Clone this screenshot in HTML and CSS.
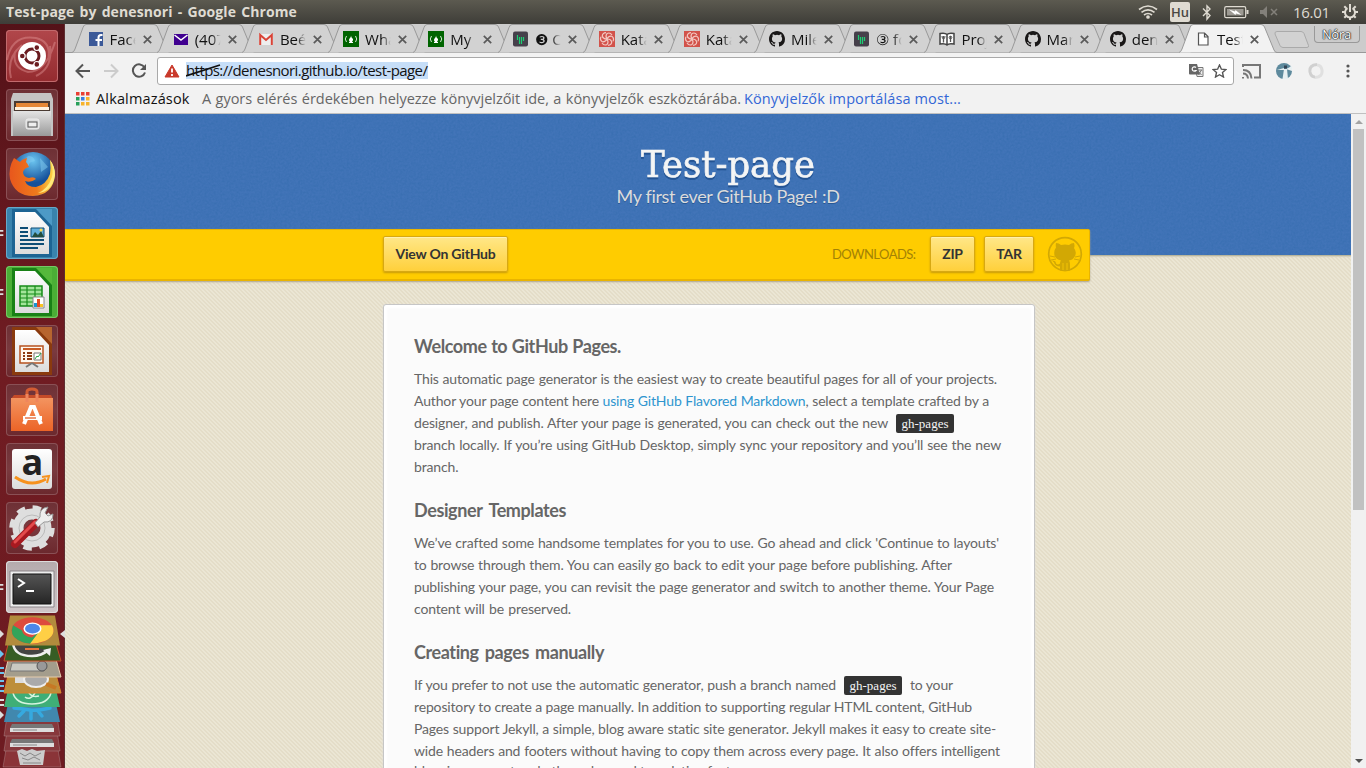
FILE: index.html
```html
<!DOCTYPE html>
<html lang="hu">
<head>
<meta charset="utf-8">
<title>Test-page by denesnori</title>
<link rel="stylesheet" href="styles.css">
</head>
<body>
<svg class="defs" width="0" height="0">
  <defs>
    <linearGradient id="paper" x2="0" y2="1"><stop offset="0" stop-color="#fff"/><stop offset="1" stop-color="#dcdcdc"/></linearGradient>
    <linearGradient id="silver" x2="0" y2="1"><stop offset="0" stop-color="#e4e4e4"/><stop offset="1" stop-color="#999"/></linearGradient>
    <linearGradient id="orange" x2="0" y2="1"><stop offset="0" stop-color="#f39460"/><stop offset="1" stop-color="#ec6427"/></linearGradient>
    <linearGradient id="dark" x2="0" y2="1"><stop offset="0" stop-color="#555"/><stop offset="1" stop-color="#252525"/></linearGradient>
    <linearGradient id="fox" x2="1" y2="0"><stop offset="0" stop-color="#e8571d"/><stop offset=".6" stop-color="#ee7a1c"/><stop offset="1" stop-color="#ffe04a"/></linearGradient>
    <radialGradient id="globe" cx=".5" cy=".2"><stop offset="0" stop-color="#6cc5f0"/><stop offset="1" stop-color="#15509a"/></radialGradient>
    <filter id="noise"><feTurbulence type="fractalNoise" baseFrequency=".45" numOctaves="2"/><feColorMatrix values="0 0 0 0 0  0 0 0 0 .08  0 0 0 0 .25  .9 .9 0 0 -.65"/></filter>
  </defs>
  <symbol id="tab" viewBox="0 0 98 29"><path d="M0 28.5 Q2 28 3 25 L11 3.500Q12 .5 14 .5H82Q84.500 .5 85.500 3L95 26Q96 28.500 98 28.500" stroke="#999"/></symbol>
  <symbol id="x" viewBox="0 0 9 9"><path d="M.8.8 8.200 8.200M8.200.8.8 8.200" stroke="#5a5a5a" stroke-width="1.700"/></symbol>
  <symbol id="cat" viewBox="0 0 16 16"><path fill="#191717" d="M8 0C3.580 0 0 3.580 0 8c0 3.540 2.290 6.530 5.470 7.590.4.070.55-.17.55-.38 0-.19-.01-.82-.01-1.490-2.010.37-2.530-.49-2.690-.94-.09-.23-.48-.94-.82-1.130-.28-.15-.68-.52-.01-.53.63-.01 1.080.58 1.230.82.72 1.210 1.870.87 2.330.66.07-.52.28-.87.51-1.070-1.780-.2-3.640-.89-3.640-3.950 0-.87.31-1.590.82-2.150-.08-.2-.36-1.020.08-2.120 0 0 .67-.21 2.200.82a7.600 7.600 0 0 1 4 0c1.530-1.040 2.200-.82 2.200-.82.44 1.100.16 1.920.08 2.120.51.56.82 1.270.82 2.150 0 3.070-1.870 3.750-3.650 3.950.29.25.54.73.54 1.480 0 1.070-.01 1.930-.01 2.200 0 .21.15.46.55.38A8.010 8.010 0 0 0 16 8c0-4.420-3.580-8-8-8Z"/></symbol>
  <symbol id="fcc" viewBox="0 0 16 16"><path fill="#006400" d="M0 0h16v16H0z"/><path d="M3.500 5Q1 8 3.500 11M12.500 5q2.500 3 0 6" fill="none" stroke="#d5e8d5"/><path d="M8 4.500q.2 2 1.500 3T9 11H7Q5 9 7 7q1-1 1-2.500z" fill="#fff"/><path d="M6 11.500h4" stroke="#fff"/></symbol>
  <symbol id="gitter" viewBox="0 0 16 16"><rect width="15" height="15" y=".5" rx="2" fill="#46404b"/><path d="M4.500 4v5M6.500 6v7M8.500 6v7M10.500 6v4" stroke="#1dce73" stroke-width="1.200"/></symbol>
  <symbol id="kata" viewBox="0 0 16 16"><path fill="#d2524a" d="M0 0h16v16H0z"/><g fill="none" stroke="#f3c7c1" stroke-width="1.200"><path id="petal" d="M8 8Q6 5 8 2.500q3-1.500 5 1.500"/><use href="#petal" transform="rotate(60 8 8)"/><use href="#petal" transform="rotate(120 8 8)"/><use href="#petal" transform="rotate(180 8 8)"/><use href="#petal" transform="rotate(240 8 8)"/><use href="#petal" transform="rotate(300 8 8)"/></g></symbol>
  <symbol id="runs" viewBox="0 0 6 8"><path d="M0 1.500h4M0 6.500h4" stroke="#ddd" stroke-width="2"/></symbol>
</svg>

<header class="panel">
  <span class="window-title">Test-page by denesnori - Google Chrome</span>
  <div class="indicators">
    <svg width="20" height="16" viewBox="0 0 20 16" fill="none" stroke="#dfdbd2" stroke-width="1.700"><path d="M1 5.500Q10-1.500 19 5.500M3.500 8.300q6.500-5 13 0M6 11q4-3 8 0"/><circle cx="10" cy="13" r="1" fill="#dfdbd2"/></svg>
    <span class="lang">Hu</span>
    <svg class="bt" width="10" height="17" viewBox="0 0 10 17" fill="none" stroke="#dfdbd2" stroke-width="1.400"><path d="m1 4.500 7 7L5 15V2l3 3-7 7"/></svg>
    <svg class="bat" width="25" height="14" viewBox="0 0 25 14"><rect x=".7" y="1.700" width="21" height="11" rx="1.500" fill="none" stroke="#dfdbd2" stroke-width="1.200"/><path d="M3 4h16.500v6.500H3z" fill="#9d9a93"/><path d="M22.500 5h2v4h-2z" fill="#dfdbd2"/><path d="m5 4.500 6 2 .5-1.500 6 5-5.500-1.500-.5 1.500z" fill="#fff"/></svg>
    <svg class="mute" width="18" height="14" viewBox="0 0 18 14"><path d="M0 5h3l4-4v12L3 9H0z" fill="#83807a"/><path d="m11 4 6 6m0-6-6 6" stroke="#83807a" stroke-width="1.500"/></svg>
    <span class="clock">16.01</span>
    <svg class="gear" width="16" height="16" viewBox="0 0 16 16" fill="none" stroke="#dfdbd2"><path d="M5.500 4.200a5 5 0 1 0 5 0" stroke-width="2"/><path d="M8 0v8" stroke-width="2"/><path d="M0 8h3M13 8h3M8 13v3M2.300 2.300l2 2M13.700 2.300l-2 2M2.300 13.700l2-2M13.700 13.700l-2-2" stroke-width="2"/></svg>
  </div>
</header>

<div class="desktop">
<nav class="launcher">
  <div class="tile dash"><svg viewBox="0 0 52 52"><g fill="none" stroke="#e9a09f" stroke-opacity=".4" stroke-width="2"><path d="M1 30Q6 4 30 8q16 4 12 22M49 12Q40 42 22 42 6 38 9 22M5 48Q0 28 16 15M30 46q17-8 14-30"/></g><circle cx="26" cy="26" r="14" fill="#fff"/><circle cx="26" cy="26" r="7" fill="none" stroke="#6a1c20" stroke-width="3"/><g stroke="#fff" stroke-width="1.200" fill="#6a1c20"><circle cx="16.300" cy="26" r="2.900"/><circle cx="30.800" cy="17.600" r="2.900"/><circle cx="30.800" cy="34.400" r="2.900"/></g></svg></div>
  <div class="tile"><svg viewBox="0 0 52 52"><path d="M7 4h38l2 6v37H5V10z" fill="#c4c4c4"/><path d="M8 12h36v12H8z" fill="#493a32"/><path d="M10 14h32v7H10z" fill="#e58735"/><path d="M9 18h34v3H9z" fill="#fff2df"/><path d="M7 22h38v25H7z" fill="url(#silver)"/><rect x="20" y="30" width="13" height="10" rx="2" fill="#ddd" stroke="#eee"/><rect x="22" y="33" width="9" height="5" fill="#eee" stroke="#555"/></svg></div>
  <div class="tile"><svg viewBox="0 0 52 52"><circle cx="27" cy="26" r="22" fill="url(#globe)"/><path d="M22 8q6 0 7 5-7 1-6 5l-7-3zM34 10l8 9-7 5z" fill="#83cdf1" opacity=".5"/><path d="M8 10Q2 20 4 31 9 48 27 48 47 47 49 27 49 19 44 12q1 8 0 14-4 11-14 13-9 0-11-6 6 2 11-2-2-3-7-1-6-1-6-6 1-4 6-5-1-3-3-5l1-4q-5 1-7 4-3-2-6-4z" fill="url(#fox)"/><path d="M44 12q4 9 2 17-4 12-14 16 14-1 17-18 0-9-5-15z" fill="#ffe97b"/></svg></div>
  <div class="tile writer"><svg class="mark"><use href="#runs"/></svg><svg viewBox="0 0 52 52"><path d="M6 2h40v48H6z" fill="#165c8c" opacity=".8"/><path d="M30 2h16v17z" fill="#4d9ac6"/><path d="M9 5h20l14 15v27H9z" fill="url(#paper)"/><path d="M14 21h8m-8 4h8m-8 4h8m-8 4h24m-24 4h24m-24 4h18" stroke="#0d4d75" stroke-width="2"/><path d="M25 21h13v9H25z" fill="#62b0dc" stroke="#0d4d75"/><path d="m26 30 3-5 3 3 3-4 3 6z" fill="#244e3e"/><circle cx="35" cy="23" r="1.500" fill="#ffd94d"/></svg></div>
  <div class="tile calc"><svg class="mark"><use href="#runs"/></svg><svg viewBox="0 0 52 52"><path d="M6 2h40v48H6z" fill="#147c13" opacity=".9"/><path d="M30 2h16v17z" fill="#55b83b"/><path d="M9 5h20l14 15v27H9z" fill="url(#paper)"/><path d="M14 20h22v20H14z" fill="#a3e59a" stroke="#178c19" stroke-width="1.500"/><path d="M14 24h22m-22 4h22m-22 4h22m-22 4h22M21 20v20M29 20v20" stroke="#178c19" stroke-width="1.200"/><path d="M27 31h11v11H27z" fill="#fff" stroke="#888"/><path d="M28 37h3v4h-3z" fill="#1b94d3"/><path d="M31 33h3v8h-3z" fill="#e64b22"/><path d="M34 38h3v3h-3z" fill="#f9c424"/></svg></div>
  <div class="tile"><svg viewBox="0 0 52 52"><path d="M6 2h40v48H6z" fill="#8a3a0e"/><path d="M30 2h16v17z" fill="#b7652f"/><path d="M9 5h20l14 15v27H9z" fill="url(#paper)"/><path d="M14 21h23v17H14z" fill="#fff8ef" stroke="#b65220" stroke-width="1.500"/><path d="M17 24h18" stroke="#c85c25" stroke-width="2"/><path d="M17 28h2m2 0h5m-9 3h2m2 0h5m-9 3h2m2 0h5" stroke="#8c3a11" stroke-width="2"/><path d="M28 28h7v7h-7z" fill="#fff" stroke="#777"/><path d="m29 34 2-3 1 1 3-4" fill="none" stroke="#28a745"/><path d="m26 38-6 4m6-4 6 4" stroke="#777" stroke-width="2"/></svg></div>
  <div class="tile"><svg viewBox="0 0 52 52"><path d="M21 18V8q0-3 5-3t5 3v10" fill="none" stroke="#d35c33" stroke-width="3"/><path d="m8 11 37 0 2 4H5z" fill="#c54b28"/><path d="M5 14h42v33H5z" fill="url(#orange)"/><path d="M21 10v8M31 10v8" stroke="#ef855d" stroke-width="3"/><path d="m18 40 7-17h3l7 17" fill="none" stroke="#fff" stroke-width="4"/><path d="M17 34h19" stroke="#fff" stroke-width="4"/><path d="M19 34h11" stroke="#e4602c" stroke-width="1.300"/></svg></div>
  <div class="tile"><svg viewBox="0 0 52 52"><rect x="6" y="6" width="40" height="40" rx="3" fill="url(#paper)"/><text x="15.500" y="32" class="amazon">a</text><path d="M9 34q16 11 31 2" fill="none" stroke="#f6921e" stroke-width="3"/><path d="m36 34 7-1-2 7" fill="none" stroke="#f6921e" stroke-width="2"/></svg></div>
  <div class="tile"><svg viewBox="0 0 52 52"><circle cx="26" cy="26" r="14" fill="none" stroke="#dedede" stroke-width="11"/><circle cx="26" cy="26" r="20.500" fill="none" stroke="#dedede" stroke-width="4.500" stroke-dasharray="8.500 7.600"/><circle cx="26" cy="26" r="13" fill="none" stroke="#bbb"/><path d="m9 42 21-21" stroke="#a71920" stroke-width="8" stroke-linecap="round"/><path d="m9 40 20-20" stroke="#e34b4c" stroke-width="3" stroke-linecap="round"/><path d="m29 21 5-6q-1-9 8-10l-3 6 3 3 5-2q0 9-9 8l-6 5z" fill="#eee" stroke="#999"/></svg></div>
  <div class="tile term"><svg class="mark"><use href="#runs"/></svg><svg viewBox="0 0 52 52"><path d="M4 10h44v36H4z" fill="#eee" stroke="#8b8589"/><path d="M7 13h38v30H7z" fill="url(#dark)" stroke="#111"/><path d="m12 18 6 4-6 4M20 30h8" fill="none" stroke="#fff" stroke-width="2"/></svg></div>
  <svg class="stack" width="65" height="155" viewBox="0 0 65 155">
    <g transform="translate(0 -5)">
    <g stroke="#ddd" stroke-opacity=".25"><path d="m8 129 48 0 5 29H3z" fill="#8a3438"/><path d="m8 115h48l4 27H4z" fill="#87383c"/><path d="M8 100h48l4 27H4z" fill="#87383c"/></g>
    <path d="M12 115h40l2 4H10zM12 130h40l2 4H10z" fill="#777"/><path d="M10 119h44v4H10zM10 134h44v4H10z" fill="#ddd"/><path d="M13 121h24M13 136h24" stroke="#888"/>
    <path d="m17 142 5-2 5 2 5-2 5 2 8-1-2 15H20z" fill="#ccc"/><path d="M20 144l5 3 5-3 5 3 6-3M22 149l6 2 6-3 6 3M23 154h18" fill="none" stroke="#888"/>
    <path d="M9 90h46l5 23H4z" fill="#4188ae"/><path d="M14 99q10 1 16 2t20-2M24 102l-5 5m12-5v8m7-8 4 5" fill="none" stroke="#36a9df" stroke-width="3.500" stroke-linecap="round"/>
    <path d="M9 76h46l5 22H4z" fill="#3fae77"/><path d="M13 84q3 11 19 11t19-11M25 88q5 4 10-4M28 82q3 7 11 5" fill="none" stroke="#d5f4df" stroke-width="1.500"/>
    <path d="M9 62h46l6 22H4z" fill="#bd8e3b" stroke="#d9852a"/><path d="M15 71h20" stroke="#ddd" stroke-width="6"/><ellipse cx="36" cy="70" rx="12" ry="8" fill="#aaa" stroke="#eee" stroke-width="2"/><path d="m46 75 10 4" stroke="#c77824" stroke-width="4"/>
    <path d="M9 47h46l6 21H4z" fill="#a49d8c" stroke="#e5cbac"/><path d="M12 54h32v8H10z" fill="#c9c9c2" stroke="#777"/><circle cx="42" cy="57" r="5" fill="#999" stroke="#555"/>
    <path d="M9 31h46l6 21H4z" fill="#365d24" stroke="#c54b25"/><path d="M13 34q1 13 19 13 10 0 16-6" fill="#444" stroke="#eee" stroke-width="2.500"/><path d="m43 41 8-2-1 8z" fill="#eee"/><path d="M25 40h14" stroke="#e8763c" stroke-width="2"/>
    </g>
    <g transform="translate(0 .6) scale(1 .88)"><path d="m10 1 45 0 5 34H5z" fill="#b28b3d"/><ellipse cx="32.500" cy="18" rx="21" ry="15" fill="#dd4b3e"/><path d="M13 12Q9 23 18 29q6 4 13 4l9-15-8 8q-9-1-10-8z" fill="#31a45a"/><path d="M52 12q5 11-7 18-7 3-15 3l10-15q0-3-5-6z" fill="#ffcf45"/><ellipse cx="32.500" cy="16" rx="9" ry="7" fill="#fff"/><ellipse cx="32.500" cy="16" rx="7.500" ry="5.500" fill="#4d87e8"/></g>
    <path d="m0 16 4 4-4 4zM65 16l-5 4 5 4zM0 97l4 4-4 4z" fill="#ddd"/><path d="m0 36 4 4-4 4z" fill="#6cc4ee"/><path d="M0 54h4M0 59h4M0 67h4M0 72h4M0 77h4" stroke="#6cc4ee" stroke-width="2"/><path d="M0 86h4m-4 5h4" stroke="#ddd" stroke-width="2"/>
  </svg>
</nav>

<main class="browser">
  <div class="tabs">
    <div class="tab"><svg class="shape"><use href="#tab"/></svg><svg class="fav" viewBox="0 0 16 16"><path fill="#3b5998" d="M1 1h14v14H1z"/><path d="M10.500 15V6.500q0-2.500 2.500-2.500h1.500M7.500 9h6.500" fill="none" stroke="#fff" stroke-width="2"/></svg><span>Face</span><svg class="close"><use href="#x"/></svg></div>
    <div class="tab"><svg class="shape"><use href="#tab"/></svg><svg class="fav" viewBox="0 0 16 16"><path fill="#400090" d="M1 3h14v11H1z"/><path d="m1.500 4 6.500 5 6.500-5" fill="none" stroke="#fff" stroke-width="1.500"/></svg><span>(407</span><svg class="close"><use href="#x"/></svg></div>
    <div class="tab"><svg class="shape"><use href="#tab"/></svg><svg class="fav" viewBox="0 0 16 16"><path fill="#eee" d="M1 3h14v11H1z"/><path d="M2.200 14V4L8 9l5.800-5v10" fill="none" stroke="#d94336" stroke-width="2"/></svg><span>Beé</span><svg class="close"><use href="#x"/></svg></div>
    <div class="tab"><svg class="shape"><use href="#tab"/></svg><svg class="fav"><use href="#fcc"/></svg><span>Wha</span><svg class="close"><use href="#x"/></svg></div>
    <div class="tab"><svg class="shape"><use href="#tab"/></svg><svg class="fav"><use href="#fcc"/></svg><span>My P</span><svg class="close"><use href="#x"/></svg></div>
    <div class="tab"><svg class="shape"><use href="#tab"/></svg><svg class="fav"><use href="#gitter"/></svg><span>❸ C</span><svg class="close"><use href="#x"/></svg></div>
    <div class="tab"><svg class="shape"><use href="#tab"/></svg><svg class="fav"><use href="#kata"/></svg><span>Kata</span><svg class="close"><use href="#x"/></svg></div>
    <div class="tab"><svg class="shape"><use href="#tab"/></svg><svg class="fav"><use href="#kata"/></svg><span>Kata</span><svg class="close"><use href="#x"/></svg></div>
    <div class="tab"><svg class="shape"><use href="#tab"/></svg><svg class="fav"><use href="#cat"/></svg><span>Mile</span><svg class="close"><use href="#x"/></svg></div>
    <div class="tab"><svg class="shape"><use href="#tab"/></svg><svg class="fav"><use href="#gitter"/></svg><span>③ fo</span><svg class="close"><use href="#x"/></svg></div>
    <div class="tab"><svg class="shape"><use href="#tab"/></svg><svg class="fav" viewBox="0 0 16 16"><path d="M1 2.500q5-1 7 1 2-2 7-1v10.500q-5-1-7 1-2-2-7-1zM8 4v9" fill="#fff" stroke="#444" stroke-width="1.500"/><path d="M4.500 5v2.500m0 0v4M11.500 5v6" fill="none" stroke="#555" stroke-width="1.300"/><circle cx="11.500" cy="6.500" r="1.300" fill="none" stroke="#555"/><path d="M3 5q0 3 1.500 3T6 5" fill="none" stroke="#555"/></svg><span>Proj</span><svg class="close"><use href="#x"/></svg></div>
    <div class="tab"><svg class="shape"><use href="#tab"/></svg><svg class="fav"><use href="#cat"/></svg><span>Mar</span><svg class="close"><use href="#x"/></svg></div>
    <div class="tab"><svg class="shape"><use href="#tab"/></svg><svg class="fav"><use href="#cat"/></svg><span>den</span><svg class="close"><use href="#x"/></svg></div>
    <div class="tab active"><svg class="shape"><use href="#tab"/></svg><svg class="fav" viewBox="0 0 16 16"><path d="M3.500 2h6l3.500 3.500V14h-9.500zM9.500 2v4H13" fill="#fff" stroke="#555" stroke-width="1.200"/></svg><span>Test</span><svg class="close"><use href="#x"/></svg></div>
    <svg class="newtab" width="36" height="18" viewBox="0 0 36 18"><path d="M3 .5h24q2 0 3 2l4.500 12q.5 2-1.500 2H9q-2 0-3-2L1 3Q.5.5 3 .5z" fill="#d2d2d2" stroke="#aaa"/></svg>
    <span class="user">Nóra</span>
  </div>

  <div class="toolbar">
    <svg width="16" height="16" viewBox="0 0 16 16" class="nav" stroke="#555"><path d="M15 8H2m6-6.500L1.500 8 8 14.500"/></svg>
    <svg width="16" height="16" viewBox="0 0 16 16" class="nav" stroke="#ccc"><path d="M1 8h13M8 1.500 14.500 8 8 14.500"/></svg>
    <svg width="16" height="16" viewBox="0 0 16 16" class="nav" stroke="#555"><path d="M13.500 4.500A6.200 6.200 0 1 0 14 9.500"/><path d="M15 1v6H9z" fill="#555" stroke="none"/></svg>
    <div class="omnibox">
      <svg class="warn" width="16" height="14" viewBox="0 0 16 14"><path d="m8 1 7 12H1z" fill="#c9392b" stroke="#c9392b"/><path d="M8 4.500v4M8 10v2" stroke="#fff" stroke-width="1.800"/></svg>
      <span class="url">https://denesnori.github.io/test-page/<svg class="slash" width="36" height="14"><path d="M0 13 34 2" stroke="#111" stroke-width="1.700"/></svg></span>
      <svg class="translate" width="15" height="15" viewBox="0 0 15 15"><path d="M6.500 4.500h7.500v9H8z" fill="#eee" stroke="#777"/><path d="M0 1h8l3 10.500H1q-1 0-1-1z" fill="#666"/><path d="M7 4.500a2.200 2.200 0 1 0 0 3H5.500" fill="none" stroke="#fff" stroke-width="1.200"/><path d="M9.500 7H13m-.5 0-3 5m0-3.500 3 3.500" stroke="#777"/></svg>
      <svg class="star" width="15" height="14" viewBox="0 0 15 14"><path d="m7.500 1 1.900 4.200 4.500.4-3.400 3 1 4.400-4-2.300-4 2.300 1-4.400-3.400-3 4.500-.4z" fill="none" stroke="#555" stroke-width="1.400"/></svg>
    </div>
    <svg class="cast" width="19" height="16" viewBox="0 0 19 16" fill="none" stroke="#777" stroke-width="2"><path d="M1 4V2h17v12.500h-6M1 14v1.500M1 10.500q4.500 0 5 5M1 7q8 0 8.500 8.500"/></svg>
    <svg class="ext" width="16" height="16" viewBox="0 0 16 16"><circle cx="8" cy="8" r="8" fill="#5e8a9d"/><path d="m10 6 6-3v5zM6.500 16 8 6h3l1 10zM1 7l7-2v2z" fill="#e8f0f2"/><path d="M8 2.500h3v3H8z" fill="#345"/></svg>
    <svg class="swirl" width="16" height="16" viewBox="0 0 16 16" fill="none" stroke-width="3"><path d="M9 1.500Q1 2 2 9q1 5 5 5" stroke="#d0d0d0"/><path d="M7 14.500Q15 14 14 7q-1-5-5-5" stroke="#e0e0e0"/></svg>
    <svg class="dots" width="4" height="14" fill="#555"><circle cx="2" cy="2" r="1.600"/><circle cx="2" cy="7" r="1.600"/><circle cx="2" cy="12" r="1.600"/></svg>
  </div>

  <div class="bookmarks">
    <svg width="14" height="14" viewBox="0 0 14 14"><path d="M0 0h3.500v3.500H0zM5 0h3.500v3.500H5zM10 0h3.500v3.500H10z" fill="#e93f33"/><path d="M0 5h3.500v3.500H0zM0 10h3.500v3.500H0z" fill="#28a05a"/><path d="M5 5h3.500v3.500H5z" fill="#3c7de0"/><path d="M10 5h3.500v3.500H10zM5 10h3.500v3.500H5zM10 10h3.500v3.500H10z" fill="#f7b32b"/></svg>
    <span class="apps">Alkalmazások</span>
    <span class="hint">A gyors elérés érdekében helyezze könyvjelzőit ide, a könyvjelzők eszköztárába.</span>
    <a class="import">Könyvjelzők importálása most...</a>
  </div>

  <div class="view">
    <div class="page">
      <div class="hero">
        <svg class="grain"><rect width="100%" height="100%" filter="url(#noise)"/></svg>
        <h1><svg width="180" height="50"><text class="shadow" x="3" y="37" textLength="174" lengthAdjust="spacingAndGlyphs">Test-page</text></svg></h1>
        <p>My first ever GitHub Page! :D</p>
      </div>
      <div class="bar">
        <a class="btn view-btn">View On GitHub</a>
        <span class="dl">DOWNLOADS:</span>
        <a class="btn zip">ZIP</a>
        <a class="btn tar">TAR</a>
        <svg class="octo" width="36" height="36" viewBox="0 0 36 36"><circle cx="18" cy="18" r="16.300" fill="none" stroke="#d2a804" stroke-width="1.700"/><path d="M9 7q3 0 5 2 4-1 8 0 2-2 5-2 1 3 0 5 3 4 1 8-2 4-6 4.500 1 1 1 4v6q-5 1.500-10 0v-4q-5 0-6-4l-2-2q4 0 4 3 2 2 4 0 0-2 1-3-5-1-6.500-5-1-5 1.500-8-.5-2 0-4.500z" fill="#d2a804"/><path d="M3 20l5 1m-4 3 5-1m24-3-5 1m4 3-5-1" stroke="#d2a804"/><path d="M16 27v7m4-7v7" stroke="#f2c304"/></svg>
      </div>
      <article class="card">
        <h3 class="h1w">Welcome to GitHub Pages.</h3>
        <div class="para">
          <span class="w583">This automatic page generator is the easiest way to create beautiful pages for all of your projects.</span>
          <span class="w575">Author your page content here <a>using GitHub Flavored Markdown</a>, select a template crafted by a</span>
          <div class="row"><span class="w474">designer, and publish. After your page is generated, you can check out the new</span><code>gh-pages</code></div>
          <span class="w587">branch locally. If you’re using GitHub Desktop, simply sync your repository and you’ll see the new</span>
          <span class="w45">branch.</span>
        </div>
        <h3 class="h2w">Designer Templates</h3>
        <div class="para">
          <span class="w585">We’ve crafted some handsome templates for you to use. Go ahead and click 'Continue to layouts'</span>
          <span class="w538">to browse through them. You can easily go back to edit your page before publishing. After</span>
          <span class="w580">publishing your page, you can revisit the page generator and switch to another theme. Your Page</span>
          <span class="w157">content will be preserved.</span>
        </div>
        <h3 class="h3w">Creating pages manually</h3>
        <div class="para">
          <div class="row"><span class="w422">If you prefer to not use the automatic generator, push a branch named</span><code>gh-pages</code><span class="w43">to your</span></div>
          <span class="w558">repository to create a page manually. In addition to supporting regular HTML content, GitHub</span>
          <span class="w582">Pages support Jekyll, a simple, blog aware static site generator. Jekyll makes it easy to create site-</span>
          <span class="w586">wide headers and footers without having to copy them across every page. It also offers intelligent</span>
          <span class="w340">blogging support and other advanced templating features.</span>
        </div>
      </article>
    </div>
    <div class="scroll"><i class="up"></i><div class="thumb"></div><i class="down"></i></div>
  </div>
</main>
</div>
</body>
</html>
```
FILE: styles.css
```css
* { box-sizing: border-box; }
body { margin: 0; width: 1366px; height: 768px; overflow: hidden; font-family: "Open Sans", "Noto Sans", sans-serif; display: flex; flex-direction: column; }
svg { display: block; flex: none; }
.defs { position: absolute; }
h1, h3, p { margin: 0; }

.panel { height: 24px; flex: none; background: linear-gradient(#5c5a50, #3e3d38); color: #dfdbd2; display: flex; align-items: center; justify-content: space-between; padding: 0 8px 0 6px; }
.window-title { font-weight: 700; font-size: 14px; line-height: 24px; width: 291px; white-space: nowrap; letter-spacing: .1px; text-align-last: justify; }
.indicators { display: flex; align-items: center; height: 24px; }
.lang { background: #dfdbd2; color: #4a4843; width: 20px; height: 20px; line-height: 20px; border-radius: 2px; font-size: 13px; font-weight: 600; text-align: center; margin-left: 12px; }
.bt { margin-left: 12px; }
.bat { margin-left: 12px; }
.mute { margin-left: 11px; }
.clock { font-size: 15px; margin-left: 15px; width: 37px; letter-spacing: -.3px; }
.gear { margin-left: 12px; }

.desktop { display: flex; flex: 1; min-height: 0; }
.launcher { width: 65px; flex: none; background: linear-gradient(#541218, #701c22 45%, #6d1b21); border-right: 1px solid #5d2e31; padding-top: 6px; display: flex; flex-direction: column; align-items: center; gap: 7px; }
.tile { width: 52px; height: 52px; flex: none; position: relative; border-radius: 4px; background: linear-gradient(#6d3035, #7a3a3f 50%, #6b282d); box-shadow: inset 0 0 0 1px #8a5055; left: 0; }
.tile > svg { width: 52px; height: 52px; }
.tile > svg.mark { position: absolute; left: -6px; top: 22px; width: 5px; height: 8px; }
.dash { background: linear-gradient(#b1474b, #942b2f); box-shadow: inset 0 0 0 1px #c26a6d; }
.writer { background: #3983ad; box-shadow: inset 0 0 0 1px #67a9c9; }
.calc { background: #4bae36; box-shadow: inset 0 0 0 1px #76c865; }
.term { background: linear-gradient(#b5abad, #cfc6c8); box-shadow: inset 0 0 0 1px #ddd; }
.amazon { font: 700 36px "Open Sans", sans-serif; fill: #222; }
.stack { margin-top: -6px; }

.browser { flex: 1; min-width: 0; display: flex; flex-direction: column; background: #f2f2f2; }
.tabs { height: 29px; flex: none; background: #ccc; border-bottom: 1px solid #999; display: flex; padding-left: 7px; position: relative; }
.tab { width: 85.2px; flex: none; height: 29px; position: relative; display: flex; align-items: center; padding-left: 15.5px; font-size: 15px; color: #111; }
.shape { position: absolute; left: 0; top: 0; width: 98px; height: 29px; fill: #d2d2d2; }
.tab > :not(.shape) { position: relative; z-index: 1; }
.active { z-index: 2; }
.active .shape { fill: #f2f2f2; }
.fav { width: 16px; height: 16px; }
.tab span { width: 28px; margin-left: 6px; overflow: hidden; white-space: nowrap; line-height: 20px; -webkit-mask-image: linear-gradient(90deg, #000 60%, transparent 92%); mask-image: linear-gradient(90deg, #000 60%, transparent 92%); }
.close { width: 9px; height: 9px; margin-left: 5px; margin-top: 1px; }
.newtab { margin: 7px 0 0 9px; }
.user { margin: 2px 0 0 4px; width: 46px; height: 17px; border: 1px solid #999; border-top: 0; border-radius: 0 0 4px 4px; font-size: 12.5px; line-height: 17px; text-align: center; color: #fff; text-shadow: 0 0 1px #222, 0 0 1px #222, 0 0 1px #222, 0 0 2px #444; }

.toolbar { height: 34px; flex: none; display: flex; align-items: center; padding: 1px 16px 0 10px; }
.nav { fill: none; stroke-width: 2; margin-right: 12px; }
.omnibox { width: 1077px; height: 28px; background: #fff; border: 1px solid #a9a9a9; border-radius: 3px; display: flex; align-items: center; margin-left: -2px; padding: 0 6px; }
.url { position: relative; margin-left: 6px; font-size: 15px; line-height: 17px; height: 17px; width: 242px; background: #c6def8; color: #111; white-space: nowrap; letter-spacing: -.58px; }
.slash { position: absolute; left: 0; top: 1px; }
.translate { margin-left: auto; }
.star { margin-left: 8px; }
.cast { margin-left: 8px; }
.ext { margin-left: 15px; }
.swirl { margin-left: 16px; }
.dots { margin-left: auto; }

.bookmarks { height: 27px; flex: none; border-bottom: 1px solid #c0c0c0; display: flex; align-items: center; padding: 0 0 3px 11px; font-size: 14.5px; white-space: nowrap; }
.bookmarks span, .bookmarks a { line-height: 22px; text-align-last: justify; }
.apps { width: 94px; margin-left: 6px; color: #111; letter-spacing: .15px; }
.hint { width: 539px; margin-left: 12px; color: #666; letter-spacing: -.02px; }
.import { width: 217px; margin-left: 3px; color: #3367d6; letter-spacing: .12px; }

.view { flex: 1; min-height: 0; display: flex; }
.page { flex: 1; height: 654px; overflow: hidden; color: #666; font-family: Lato, sans-serif; background: #e9e3d0 linear-gradient(45deg, #ebe6d4 25%, #e4ddc8 25% 50%, #ebe6d4 50% 75%, #e4ddc8 75%) 0 0 / 4px 4px; }
.hero { height: 142px; background: #4274b8; border-bottom: 1px solid #b9b69c; box-shadow: 0 1px 1px #d5d0bd; position: relative; display: flex; flex-direction: column; align-items: center; padding: 26px 0 0 40px; }
.grain { position: absolute; left: 0; top: 0; width: 100%; height: 100%; opacity: .18; }
.hero h1 { height: 45px; position: relative; }
.shadow { font: 37px "DejaVu Serif", serif; fill: #f4f5f5; stroke: #f4f5f5; stroke-width: .7px; filter: drop-shadow(0 2px 0 #245493); }
.hero p { position: relative; font-size: 18px; line-height: 22px; color: #dcdcdc; width: 223px; white-space: nowrap; text-align-last: justify; text-shadow: 0 1px 0 #285894; letter-spacing: -.38px; }
.bar { position: relative; width: 1025px; height: 52px; margin-top: -27px; background: #ffcc00; border: solid #e9b400; border-width: 1px 1px 2px 0; border-radius: 0 2px 2px 0; box-shadow: 0 1px 2px #aaa28b; display: flex; padding: 6px 6px 0 318px; }
.btn { height: 36px; line-height: 33px; border: 1px solid #d7a813; border-radius: 2px; background: linear-gradient(#ffe788, #ffd03b); box-shadow: inset 0 1px #fff1af, 0 1px 2px #c69a0b; color: #333; font-size: 14px; font-weight: 700; text-align: center; white-space: nowrap; letter-spacing: -.2px; }
.view-btn { width: 125px; }
.dl { margin-left: auto; width: 83px; font-size: 13px; line-height: 37px; color: #a38205; white-space: nowrap; letter-spacing: -.55px; }
.zip { width: 45px; margin-left: 15px; }
.tar { width: 50px; margin-left: 9px; }
.octo { margin-left: 13px; }
.card { width: 652px; height: 520px; margin: 23px 0 0 318px; padding: 29px 30px; background: #fbfbfb; border: 1px solid #c6c6c6; border-radius: 3px; box-shadow: inset 0 0 3px 3px #fff, 0 1px 2px #ddd; }
.card h3 { font-size: 18px; font-weight: 700; line-height: 24px; height: 24px; white-space: nowrap; text-align-last: justify; letter-spacing: -.4px; }
.h1w { width: 207px; } .h2w { width: 152px; } .h3w { width: 190px; }
.para { padding-top: 10px; margin-bottom: 20px; font-size: 14px; line-height: 22px; }
.para span { display: block; height: 22px; white-space: nowrap; text-align-last: justify; letter-spacing: -.15px; }
.para a { color: #2e95cf; }
.row { display: flex; height: 22px; align-items: center; }
code { width: 58px; height: 19px; margin: 0 8px; background: #333; color: #f5f5f5; border-radius: 2px; font: 13px/19px "Liberation Serif", serif; text-align: center; }
.w583 { width: 583px; } .w575 { width: 575px; } .w474 { width: 474px; } .w587 { width: 587px; } .w45 { width: 45px; }
.w585 { width: 585px; } .w538 { width: 538px; } .w580 { width: 580px; } .w157 { width: 157px; }
.w422 { width: 422px; } .w43 { width: 43px; } .w558 { width: 558px; } .w582 { width: 582px; } .w586 { width: 586px; }
.para .w340 { width: 340px; margin-top: -2px; }

.scroll { width: 15px; background: #f1f1f1; display: flex; flex-direction: column; align-items: center; }
.up, .down { border: 4px solid transparent; height: 0; }
.up { border-bottom-color: #a3a3a3; border-top: 0; margin: 6px 0 5px; }
.down { border-top-color: #505050; border-bottom: 0; margin: auto 0 5px; }
.thumb { width: 11px; height: 381px; background: #c1c1c1; }
```
